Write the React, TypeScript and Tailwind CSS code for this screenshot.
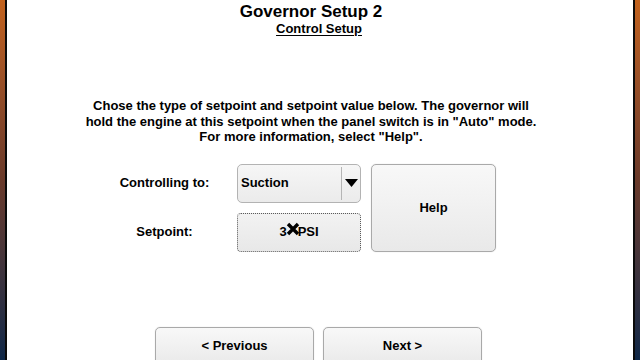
import React from 'react';

const font = { fontFamily: '"Liberation Sans", Arial, sans-serif' };

function Strip({ side }: { side: 'left' | 'right' }) {
  const color = <div className="w-[5px] h-full bg-gradient-to-b from-[#c2621c] via-[#6a3a2a] to-[#0e2747]" />;
  const black = <div className="w-[2px] h-full bg-[#0a0a0a]" />;
  return (
    <div className="flex h-full shrink-0">
      {side === 'left' ? (
        <>
          {color}
          {black}
        </>
      ) : (
        <>
          {black}
          {color}
        </>
      )}
    </div>
  );
}

const btn =
  'border border-[#a9a9a9] rounded-[5px] bg-gradient-to-b from-[#f8f8f8] to-[#e9e9e9] shadow-[0_0_1px_#c8c8c8] flex items-center justify-center text-[13px] font-bold text-black';

export default function App() {
  return (
    <div className="w-[640px] h-[360px] overflow-hidden bg-white flex" style={font}>
      <Strip side="left" />
      <div className="flex-1 flex flex-col">
        <div className="pr-[18px] flex flex-col items-center">
          <h1 className="text-[17px] leading-[19px] font-bold text-black mt-[2px]">Governor Setup 2</h1>
          <h2 className="ml-[16px] text-[13px] leading-[15px] font-bold underline underline-offset-2 text-black">Control Setup</h2>
          <p className="mt-[62px] text-[13px] leading-[15.5px] font-bold text-center text-black">
            Chose the type of setpoint and setpoint value below. The governor will
            <br />
            hold the engine at this setpoint when the panel switch is in "Auto" mode.
            <br />
            For more information, select "Help".
          </p>
        </div>

        <div className="mt-[19px] ml-[85px] flex">
          <div className="w-[145px] flex flex-col text-[13px] font-bold text-black">
            <div className="h-[39px] flex items-center justify-center">Controlling to:</div>
            <div className="h-[39px] mt-[10px] flex items-center justify-center">Setpoint:</div>
          </div>
          <div className="flex flex-col">
            <div className="w-[124px] h-[39px] border border-[#b3b3b3] rounded-[5px] bg-gradient-to-b from-[#f6f6f6] to-[#ebebeb] flex items-stretch">
              <div className="flex-1 flex items-center pl-[3px] text-[13px] font-bold text-black">Suction</div>
              <div className="w-px my-[2px] bg-[#b5b5b5]" />
              <div className="w-[18px] flex items-center justify-center">
                <svg width="13" height="8" viewBox="0 0 13 8">
                  <polygon points="0,0 13,0 6.5,8" fill="#000" />
                </svg>
              </div>
            </div>
            <div className="w-[124px] h-[39px] mt-[10px] border border-dotted border-[#5a5a5a] rounded-[4px] bg-gradient-to-b from-[#f2f2f2] to-[#e8e8e8] flex items-center justify-center text-[13px] font-bold text-black">
              <span>3</span>
              <span className="relative inline-block w-[11px] h-[14px]">
                <svg className="absolute left-[-1px] top-[-3px]" width="14" height="14" viewBox="0 0 14 14">
                  <path d="M2 2 L12 12 M12 2 L2 12" stroke="#000" strokeWidth="3.4" strokeLinecap="butt" />
                </svg>
              </span>
              <span>PSI</span>
            </div>
          </div>
          <div className={`${btn} ml-[10px] w-[125px] h-[88px]`}>Help</div>
        </div>

        <div className="mt-[75px] ml-[148px] flex gap-[9px]">
          <div className={`${btn} w-[159px] h-[40px] items-start pt-[8px]`}>&lt; Previous</div>
          <div className={`${btn} w-[159px] h-[40px] items-start pt-[8px]`}>Next &gt;</div>
        </div>
      </div>
      <Strip side="right" />
    </div>
  );
}
